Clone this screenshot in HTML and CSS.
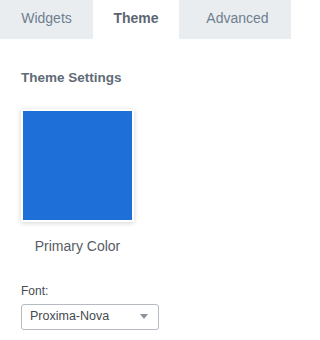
FILE: index.html
```html
<!DOCTYPE html>
<html>
<head>
<meta charset="utf-8">
<link rel="stylesheet" href="styles.css">
</head>
<body>
<div class="panel">
  <div class="tabs">
    <div class="tab">Widgets</div>
    <div class="tab active">Theme</div>
    <div class="tab tab-adv">Advanced</div>
  </div>
  <div class="content">
    <h2 class="heading">Theme Settings</h2>
    <div class="color-item">
      <div class="swatch"><div class="swatch-fill"></div></div>
      <div class="swatch-label">Primary Color</div>
    </div>
    <div class="field">
      <div class="field-label">Font:</div>
      <div class="select">
        <span class="select-value">Proxima-Nova</span>
        <span class="select-arrow"></span>
      </div>
    </div>
  </div>
</div>
</body>
</html>
```
FILE: styles.css
```css
html, body {
  margin: 0;
  padding: 0;
  background: #ffffff;
}
body {
  font-family: "Liberation Sans", Arial, sans-serif;
}
.panel {
  width: 291px;
}
.tabs {
  display: grid;
  grid-template-columns: 93px 86px 1fr;
  height: 39px;
  background: #e9edef;
}
.tab {
  display: flex;
  align-items: center;
  justify-content: center;
  font-size: 14px;
  color: #6f7f90;
  padding-bottom: 3px;
  box-sizing: border-box;
}
.tab.active {
  background: #ffffff;
  color: #5b6672;
  font-weight: bold;
}
.tab-adv {
  padding-left: 5px;
}
.content {
  padding: 31px 21px 0 21px;
}
.heading {
  margin: 0;
  font-size: 13.5px;
  font-weight: bold;
  color: #606b77;
  line-height: 15.5px;
}
.color-item {
  width: 113px;
  margin-top: 23px;
  display: flex;
  flex-direction: column;
  align-items: center;
}
.swatch {
  width: 113px;
  height: 113px;
  box-sizing: border-box;
  border: 2px solid #ffffff;
  box-shadow: 0 1px 5px rgba(0, 0, 0, 0.18);
  background: #ffffff;
}
.swatch-fill {
  width: 100%;
  height: 100%;
  background: #1f6fd8;
}
.swatch-label {
  margin-top: 16px;
  font-size: 14px;
  line-height: 16px;
  color: #565d65;
}
.field {
  margin-top: 30px;
}
.field-label {
  font-size: 12px;
  line-height: 14px;
  color: #474d54;
}
.select {
  margin-top: 6px;
  width: 138px;
  height: 26px;
  box-sizing: border-box;
  border: 1px solid #b5bbc1;
  border-radius: 3px;
  display: flex;
  align-items: center;
  justify-content: space-between;
  padding: 0 10px 0 8px;
}
.select-value {
  font-size: 12.5px;
  color: #444a50;
  padding-bottom: 1px;
}
.select-arrow {
  width: 0;
  height: 0;
  border-left: 4px solid transparent;
  border-right: 4px solid transparent;
  border-top: 5px solid #8c949b;
}
```
